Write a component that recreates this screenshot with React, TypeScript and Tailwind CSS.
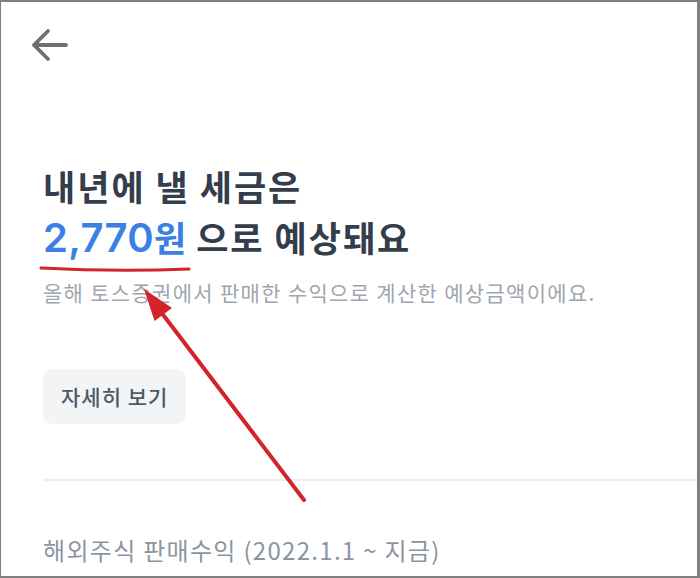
export default function App() {
  return (
    <div
      className="relative w-[700px] h-[578px] overflow-hidden bg-white border-t-2 border-b-2 border-l border-r-[3px] border-[#808080]"
      style={{ fontFamily: '"Noto Sans CJK KR", "Noto Sans", sans-serif' }}
    >
      {/* back button */}
      <div className="pt-[23px] pl-[29px]">
        <svg width="40" height="40" viewBox="0 0 40 40" fill="none">
          <path
            d="M4 20 H36 M18 6 L4 20 L18 34"
            stroke="#6f6f6f"
            strokeWidth="3.8"
            strokeLinecap="round"
            strokeLinejoin="round"
          />
        </svg>
      </div>

      <div className="pl-[42px]">
        <h1 className="mt-[95px] text-[35px] leading-[51px] font-bold tracking-[2px] text-[#333d4b]">
          내년에 낼 세금은
          <br />
          <span
            className="text-[40px] font-semibold tracking-[0.3px] text-[#3b80e3]"
            style={{ fontFamily: 'Inter, "Noto Sans CJK KR", sans-serif' }}
          >
            2,770
          </span>
          <span className="text-[#3b80e3]">원</span>
          <span className="ml-[8px]">으로 예상돼요</span>
        </h1>
        <p className="mt-[15px] text-[21px] leading-[28px] text-[#a0a6ad] tracking-[1.3px]">
          올해 토스증권에서 판매한 수익으로 계산한 예상금액이에요.
        </p>
        <button className="mt-[63px] h-[55px] px-[18px] rounded-[9px] bg-[#f2f4f6] text-[21px] font-medium tracking-[1px] text-[#4e5968]">
          자세히 보기
        </button>
        <div className="mt-[55px] h-[2px] bg-[#eceef0]" />
        <p className="mt-[53px] text-[24px] leading-[32px] text-[#8b95a1] tracking-[1.3px]">
          해외주식 판매수익 (2022.1.1 ~ 지금)
        </p>
      </div>

      {/* annotation overlay */}
      <svg
        className="absolute left-0 top-0 pointer-events-none"
        width="700"
        height="578"
        viewBox="0 0 700 578"
      >
        <path d="M40 266 Q115 270 188 267" stroke="#d3232b" strokeWidth="3" fill="none" strokeLinecap="round" />
        <line x1="303" y1="498" x2="160" y2="310" stroke="#d3232b" strokeWidth="4" strokeLinecap="round" />
        <polygon points="143,287 153.5,319 171,306" fill="#d3232b" />
      </svg>
    </div>
  );
}
